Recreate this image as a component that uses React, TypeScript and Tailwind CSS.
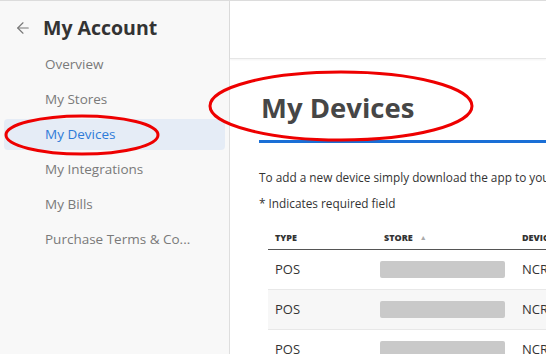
import { ArrowLeft } from 'lucide-react';

const navItems = ['Overview', 'My Stores', 'My Devices', 'My Integrations', 'My Bills', 'Purchase Terms & Co...'];

const rows = [
  { type: 'POS', device: 'NCR' },
  { type: 'POS', device: 'NCR' },
  { type: 'POS', device: 'NCR' },
];

export default function App() {
  return (
    <div
      className="relative flex h-[354px] w-[546px] overflow-hidden border-t border-[#dcdcdc] bg-white"
      style={{ fontFamily: '"Open Sans", "Noto Sans", sans-serif' }}
    >
      {/* sidebar */}
      <aside className="w-[230px] shrink-0 border-r border-[#dedede] bg-[#f8f8f8]">
        <div className="mt-[13px] flex h-[28px] items-center pl-[14px]">
          <ArrowLeft size={18} strokeWidth={1.5} className="text-[#777]" />
          <h2 className="ml-[11px] text-[19.5px] font-bold leading-[28px] text-[#333]">My Account</h2>
        </div>
        <ul className="px-[4px] pt-[3px]">
          {navItems.map((item) => {
            const active = item === 'My Devices';
            return (
              <li
                key={item}
                className={
                  active
                    ? 'mt-[4px] flex h-[31px] items-center whitespace-nowrap rounded-[4px] bg-[#e5ecf6] pl-[41px] text-[13.5px] text-[#2e7bd8]'
                    : 'mt-[4px] flex h-[31px] items-center whitespace-nowrap pl-[41px] text-[13.5px] text-[#7a7a7a]'
                }
              >
                {item}
              </li>
            );
          })}
        </ul>
      </aside>

      {/* main */}
      <main className="min-w-0 flex-1">
        <div className="h-[58px] border-b border-[#e6e6e6] shadow-[0_1px_2px_rgba(0,0,0,0.05)]" />
        <div className="pl-[29px]">
          <h1 className="mt-[30px] ml-[2px] whitespace-nowrap text-[27.5px] font-bold leading-[38px] text-[#464646]">
            My Devices
          </h1>
          <div className="mt-[13px] h-[3px] bg-[#1a6fd6]" />
          <p className="mt-[26px] whitespace-nowrap text-[11.8px] leading-[17px] text-[#333]">
            To add a new device simply download the app to your device
          </p>
          <p className="mt-[9px] whitespace-nowrap text-[11.8px] leading-[17px] text-[#333]">* Indicates required field</p>

          <div className="ml-[9px] mt-[15px]">
            <div className="flex h-[23px] items-start border-b border-[#555] pt-[2px] text-[9px] font-extrabold text-[#333]">
              <div className="w-[109px] shrink-0 pl-[7px] leading-[18px]">TYPE</div>
              <div className="flex w-[138px] shrink-0 items-center pl-[7px] leading-[18px]">
                STORE
                <span className="ml-[7px] text-[7px] text-[#aaa]">▲</span>
              </div>
              <div className="whitespace-nowrap pl-[7px] leading-[18px]">DEVICE</div>
            </div>
            {rows.map((row, i) => (
              <div
                key={i}
                className={
                  i % 2 === 1
                    ? 'flex h-[40px] items-center border-b border-[#e8e8e8] bg-[#f7f7f7] text-[13px] text-[#333]'
                    : 'flex h-[40px] items-center border-b border-[#e8e8e8] text-[13px] text-[#333]'
                }
              >
                <div className="w-[109px] shrink-0 pl-[7px]">{row.type}</div>
                <div className="w-[138px] shrink-0 pl-[3px]">
                  <div className="h-[17px] w-[125px] rounded-[2px] bg-[#c9c9c9] blur-[0.5px]" />
                </div>
                <div className="whitespace-nowrap pl-[7px]">{row.device}</div>
              </div>
            ))}
          </div>
        </div>
      </main>

      {/* red annotation ellipses */}
      <svg className="pointer-events-none absolute left-0 top-0" width="546" height="354">
        <ellipse cx="82" cy="134" rx="76" ry="19" fill="none" stroke="#ee0000" strokeWidth="3" />
        <ellipse cx="341" cy="105" rx="131" ry="34" fill="none" stroke="#ee0000" strokeWidth="3" />
      </svg>
    </div>
  );
}
